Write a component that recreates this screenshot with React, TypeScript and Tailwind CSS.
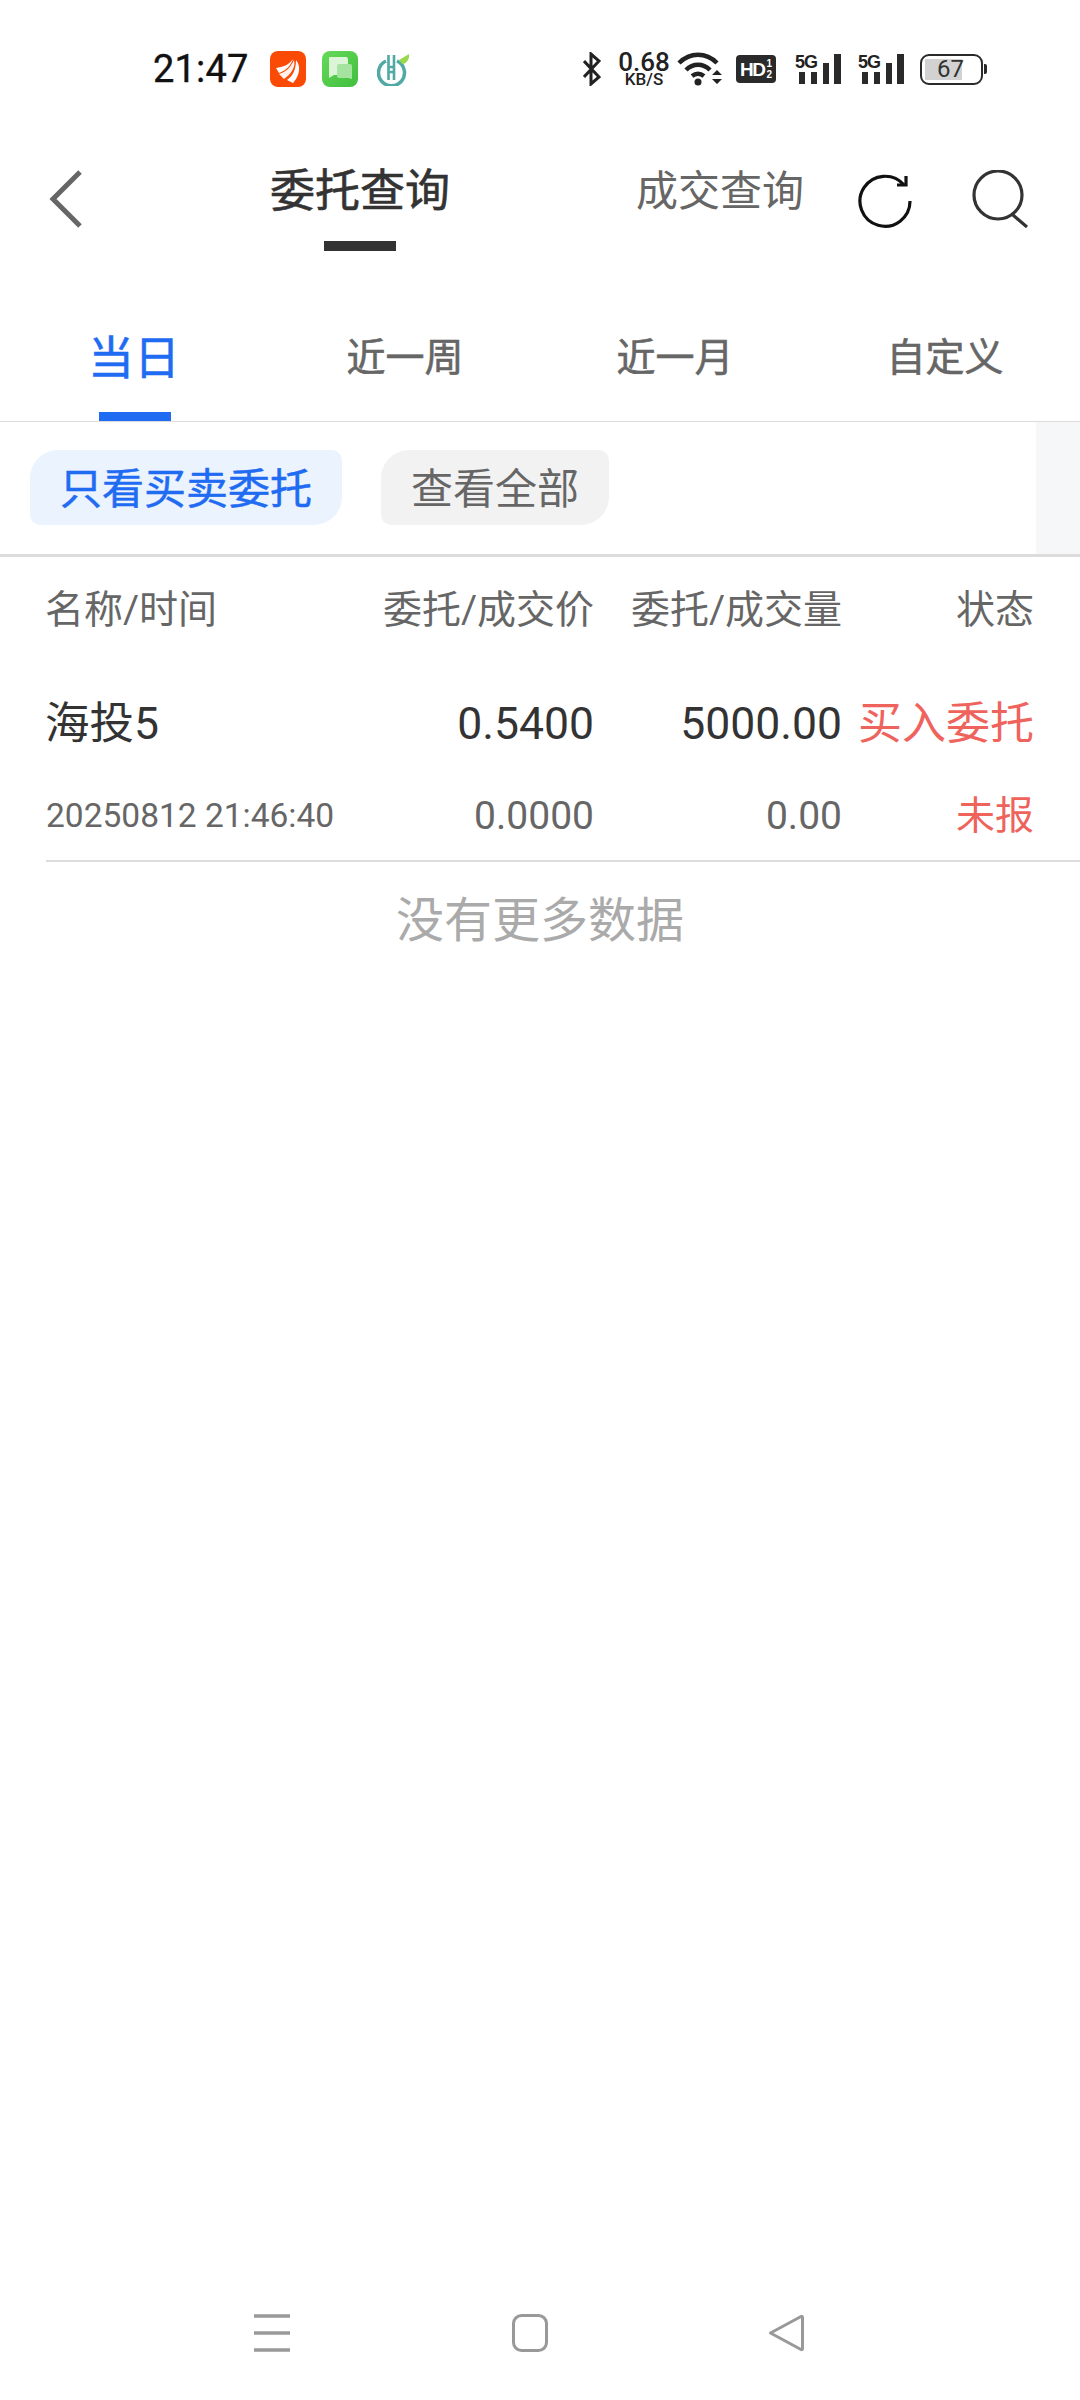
function AppIcons() {
  return (
    <div className="ml-[23px] flex items-center">
      <svg width="36" height="36" viewBox="0 0 36 36">
        <rect width="36" height="36" rx="8" fill="#fb4a05" />
        <path d="M6 17c7-1 13-3 17-9-2 6-6 11-14 14z" fill="#fff" />
        <path d="M9 23c7-2 12-7 15-14 2 7-3 14-10 19z" fill="#fff" opacity="0.92" />
        <path d="M17 29c6-4 9-11 9-20 5 6 4 15-3 23z" fill="#fff" />
      </svg>
      <svg className="ml-[16px]" width="36" height="36" viewBox="0 0 36 36">
        <defs>
          <linearGradient id="chat" x1="0" y1="0" x2="1" y2="1">
            <stop offset="0" stopColor="#66d95a" />
            <stop offset="1" stopColor="#3fbe3c" />
          </linearGradient>
        </defs>
        <rect width="36" height="36" rx="8" fill="url(#chat)" />
        <path d="M8 6h16a2 2 0 0 1 2 2v14a2 2 0 0 1-2 2H12l-5 3V7a1 1 0 0 1 1-1z" fill="#dcf5d6" />
        <path d="M17 13h11a2 2 0 0 1 2 2v13l-4-1H17a2 2 0 0 1-2-2V15a2 2 0 0 1 2-2z" fill="#a4e4a0" />
      </svg>
      <svg className="ml-[19px]" width="34" height="34" viewBox="0 0 34 34">
        <path d="M9 9a13 13 0 1 0 11 0" fill="none" stroke="#4fa9a5" strokeWidth="3.5" />
        <path d="M11.500 3v25M17 3v25M11 15h7M11 20h7" stroke="#4fa9a5" strokeWidth="2.6" fill="none" />
        <path d="M22 8l10-6c1 5-3 10-7 10z" fill="#9ad84e" />
      </svg>
    </div>
  );
}

function SignalIcon({ className }: { className?: string }) {
  return (
    <div className={`relative h-[32px] w-[46px] ${className}`}>
      <svg width="46" height="32" viewBox="0 0 46 32">
        <rect x="4" y="19" width="6" height="12" fill="#2a2a2a" />
        <rect x="16" y="19" width="6" height="12" fill="#2a2a2a" />
        <rect x="28" y="10" width="6" height="21" fill="#2a2a2a" />
        <rect x="39" y="1" width="7" height="30" fill="#2a2a2a" />
      </svg>
      <span className="absolute top-0 left-0 font-['Liberation_Sans',sans-serif] text-[18px] leading-[18px] font-bold tracking-[-1px] text-[#222]">
        5G
      </span>
    </div>
  );
}

function StatusBar() {
  return (
    <div className="flex h-[138px] items-center pl-[153px] text-[#111]">
      <div className="w-[94px] text-[38px] leading-[44px] tracking-[0.2px] [-webkit-text-stroke:0.4px]">21:47</div>
      <AppIcons />
      <svg className="ml-[172px]" width="18" height="34" viewBox="0 0 18 34">
        <path d="M1 9l15 16-8 7V2l8 7L1 25" fill="none" stroke="#222" strokeWidth="3" />
      </svg>
      <div className="ml-[16px] flex w-[54px] flex-col items-center font-medium text-[#222]">
        <span className="text-[26px] leading-[20px]">0.68</span>
        <span className="text-[17px] leading-[15px]">KB/S</span>
      </div>
      <svg className="ml-[6px]" width="45" height="34" viewBox="0 0 45 34">
        <path d="M2 11c11-11 27-11 38 0M9 18c7-7 17-7 24 0M15 24c4-3 8-3 12 0" fill="none" stroke="#222" strokeWidth="4.5" />
        <circle cx="21" cy="30" r="3.5" fill="#222" />
        <path d="M35 23l5-5 5 5zM35 27l5 5 5-5z" fill="#222" />
      </svg>
      <div className="ml-[14px] flex h-[28px] w-[40px] items-center justify-center rounded-[4px] bg-[#2a2a2a] font-['Liberation_Sans',sans-serif] text-white">
        <span className="text-[19px] leading-none font-bold tracking-[-1.5px]">HD</span>
        <span className="ml-[2px] flex flex-col text-[10px] leading-[11px] font-bold">
          <span>1</span>
          <span>2</span>
        </span>
      </div>
      <SignalIcon className="ml-[19px]" />
      <SignalIcon className="ml-[17px]" />
      <div className="ml-[16px] flex items-center">
        <div className="flex h-[31px] w-[63px] items-center rounded-[9px] border-[2.5px] border-[#2a2a2a] p-[3px]">
          <div className="flex h-full w-[37px] items-center justify-end bg-[#d2d2d2] text-[24px] leading-none text-[#333]">
            <span className="-mr-[2px]">67</span>
          </div>
        </div>
        <div className="ml-[1px] h-[10px] w-[3px] rounded-r-[2px] bg-[#2a2a2a]" />
      </div>
    </div>
  );
}

function NavBar() {
  return (
    <div className="flex h-[112px] items-start pt-[32px]">
      <svg className="ml-[49px]" width="34" height="58" viewBox="0 0 34 58">
        <path d="M31 2 4 29l27 27" fill="none" stroke="#666" strokeWidth="5" />
      </svg>
      <div className="ml-[189px] flex w-[176px] flex-col items-center">
        <div className="text-[45px] leading-[44px] whitespace-nowrap text-[#333] [-webkit-text-stroke:0.6px]">委托查询</div>
        <div className="mt-[27px] h-[10px] w-[72px] bg-[#333]" />
      </div>
      <div className="ml-[188px] text-[42px] leading-[44px] text-[#666]">成交查询</div>
      <svg className="ml-[54px] mt-[4px]" width="54" height="54" viewBox="0 0 54 54">
        <path d="M52 27A25 25 0 1 1 46 11" fill="none" stroke="#111" strokeWidth="3.2" />
        <path d="M39 11h9V2" fill="none" stroke="#111" strokeWidth="3.2" />
      </svg>
      <svg className="ml-[60px]" width="56" height="58" viewBox="0 0 56 58">
        <circle cx="26" cy="25" r="24" fill="none" stroke="#333" strokeWidth="3.2" />
        <path d="m41 45 14 12" fill="none" stroke="#333" strokeWidth="3.2" />
      </svg>
    </div>
  );
}

function Tabs() {
  const tabs = ['当日', '近一周', '近一月', '自定义'];
  return (
    <div className="grid h-[172px] grid-cols-4 border-b border-[#dcdcdc]">
      {tabs.map((tab, i) => (
        <div key={tab} className="relative flex flex-col items-center pt-[85px]">
          <span
            className={
              i === 0
                ? '-ml-[2px] text-[46px] leading-[46px] text-[#1f6bf2] [-webkit-text-stroke:0.5px]'
                : 'text-[39px] leading-[46px] text-[#666] [-webkit-text-stroke:0.6px]'
            }
          >
            {tab}
          </span>
          {i === 0 && <div className="absolute bottom-0 h-[9px] w-[72px] bg-[#1f6bf2]" />}
        </div>
      ))}
    </div>
  );
}

function FilterRow() {
  return (
    <div className="flex h-[135px] border-b-[3px] border-[#dcdcdc]">
      <div className="flex flex-1 items-start gap-[39px] pt-[28px] pl-[30px]">
        <div className="flex h-[75px] items-center rounded-[10px] rounded-tl-[28px] rounded-br-[28px] bg-[#ebf3fe] px-[30px] pt-[4px] text-[42px] text-[#1f6bf2] [-webkit-text-stroke:0.5px]">
          只看买卖委托
        </div>
        <div className="flex h-[75px] items-center rounded-[10px] rounded-tl-[28px] rounded-br-[28px] bg-[#f2f2f2] px-[30px] pt-[4px] text-[42px] text-[#666]">
          查看全部
        </div>
      </div>
      <div className="w-[44px] bg-[#f6f7f9]" />
    </div>
  );
}

function OrderTable() {
  return (
    <div>
      <div className="grid h-[106px] grid-cols-[301px_248px_248px_192px] items-center pl-[45px] text-[39px] text-[#666]">
        <div>名称/时间</div>
        <div className="text-right">委托/成交价</div>
        <div className="text-right">委托/成交量</div>
        <div className="text-right">状态</div>
      </div>
      <div className="grid h-[122px] grid-cols-[301px_248px_248px_192px] items-center pl-[45px] text-[44.500px] text-[#333]">
        <div>海投5</div>
        <div className="text-right">0.5400</div>
        <div className="text-right">5000.00</div>
        <div className="text-right text-[44px] text-[#ef635d]">买入委托</div>
      </div>
      <div className="ml-[46px] grid h-[77px] grid-cols-[300px_248px_248px_192px] items-start border-b-[2px] border-[#dcdcdc] pt-[1px] text-[39px] leading-[60px] text-[#666]">
        <div className="text-[33.500px]">20250812 21:46:40</div>
        <div className="text-right">0.0000</div>
        <div className="text-right">0.00</div>
        <div className="text-right text-[39px] text-[#ef635d]">未报</div>
      </div>
      <div className="flex h-[118px] items-center justify-center text-[48px] text-[#aaa]">没有更多数据</div>
    </div>
  );
}

function BottomNav() {
  return (
    <div className="mt-auto flex h-[134px] items-center pl-[254px]">
      <svg width="36" height="38" viewBox="0 0 36 38">
        <path d="M0 2h36M0 19h36M0 36h36" stroke="#999" strokeWidth="3.500" />
      </svg>
      <svg className="ml-[222px]" width="36" height="38" viewBox="0 0 36 38">
        <rect x="1.500" y="1.500" width="33" height="35" rx="8" fill="none" stroke="#999" strokeWidth="3" />
      </svg>
      <svg className="ml-[220px]" width="36" height="38" viewBox="0 0 36 38">
        <path d="M33 2.500 2.500 19 33 35.500a1 1 0 0 0 1.500-1V3.500a1 1 0 0 0-1.500-1z" fill="none" stroke="#999" strokeWidth="3" strokeLinejoin="round" />
      </svg>
    </div>
  );
}

export default function App() {
  return (
    <div className="flex min-h-[2400px] w-[1080px] flex-col overflow-hidden bg-white font-['Roboto','Noto_Sans_CJK_SC',sans-serif]">
      <StatusBar />
      <NavBar />
      <Tabs />
      <FilterRow />
      <OrderTable />
      <BottomNav />
    </div>
  );
}
